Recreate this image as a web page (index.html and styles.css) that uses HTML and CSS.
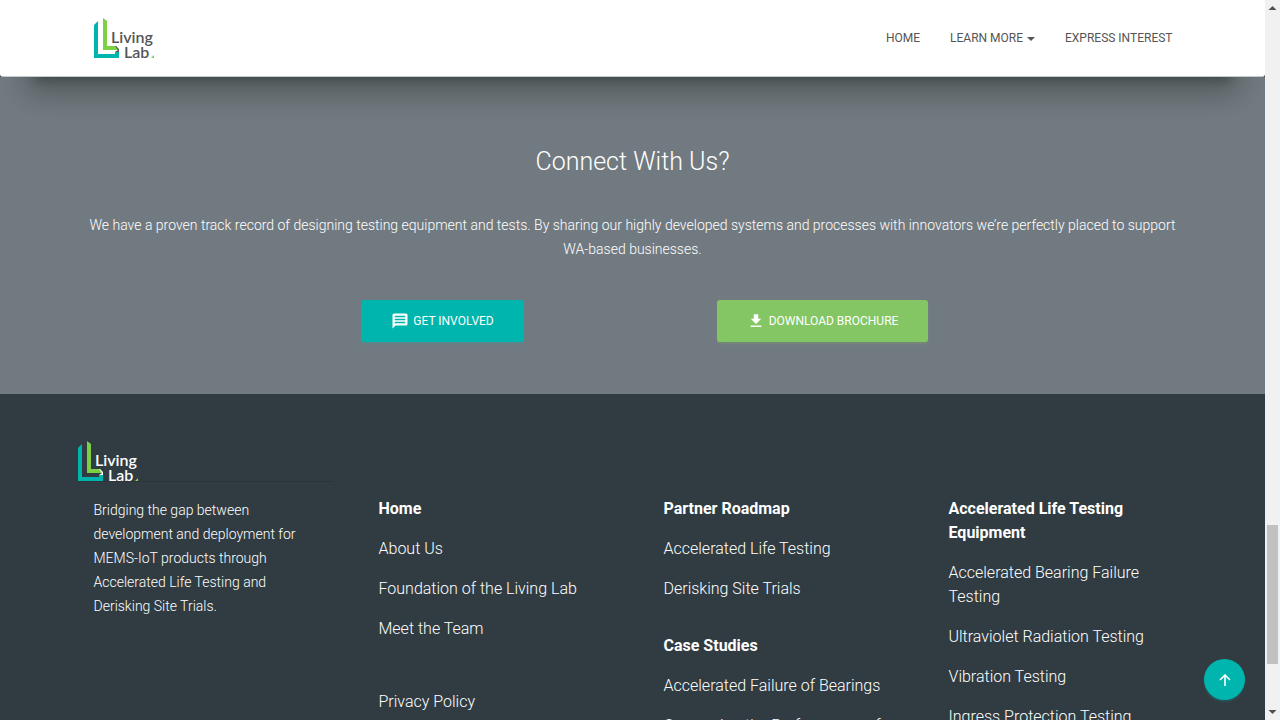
FILE: index.html
```html
<!DOCTYPE html>
<html lang="en">
<head>
<meta charset="utf-8">
<meta name="viewport" content="width=device-width, initial-scale=1">
<title>Living Lab</title>
<link rel="stylesheet" href="styles.css">
</head>
<body>
<div class="page">
  <header class="header">
    <nav class="container nav">
      <a href="#" class="brand" aria-label="Living Lab">
        <svg class="logo" viewBox="0 0 62 40">
          <path d="M0 7L4 3V36H21V34H25V40H0Z" fill="#00b5ad"/>
          <path d="M9 0L13 3V28H22L25 32H9Z" fill="#7cd043"/>
          <path d="M21 28H22L25 31V34H21L24 32Z" fill="#55555a"/>
          <path d="M60 37V40H57Z" fill="#7cd043"/>
          <text class="logo-text" x="17" y="25">Living</text>
          <text class="logo-text" x="30" y="40">Lab</text>
        </svg>
      </a>
      <ul class="menu">
        <li><a href="#">Home</a></li>
        <li><a href="#">Learn More <span class="caret"></span></a></li>
        <li><a href="#">Express Interest</a></li>
      </ul>
    </nav>
  </header>
  <main class="connect">
    <div class="raised"></div>
    <div class="container">
      <h2 class="title">Connect With Us?</h2>
      <p class="lead">We have a proven track record of designing testing equipment and tests. By sharing our highly developed systems and processes with innovators we’re perfectly placed to support WA-based businesses.</p>
      <div class="actions">
        <a href="#" class="btn btn-teal"><svg viewBox="0 0 24 24"><path fill-rule="evenodd" d="M20 2H4a2 2 0 0 0-2 2v18l4-4h14a2 2 0 0 0 2-2V4a2 2 0 0 0-2-2zM5 5h14v2H5zM5 9h14v2H5zM5 13h14v2H5z"/></svg>Get Involved</a>
        <a href="#" class="btn btn-green"><svg viewBox="0 0 24 24"><path d="M19 9h-4V3H9v6H5l7 7zM5 18v2h14v-2z"/></svg>Download Brochure</a>
      </div>
    </div>
  </main>
  <footer class="footer">
    <div class="container columns">
      <div class="about">
        <a href="#" class="brand-footer" aria-label="Living Lab">
          <svg class="logo logo-light" viewBox="0 0 62 40">
            <path d="M0 7L4 3V36H21V34H25V40H0Z" fill="#00b5ad"/>
            <path d="M9 0L13 3V28H22L25 32H9Z" fill="#7cd043"/>
            <path d="M21 28H22L25 31V34H21L24 32Z" fill="#fff"/>
            <path d="M60 37V40H57Z" fill="#7cd043"/>
            <text class="logo-text" x="17" y="25">Living</text>
            <text class="logo-text" x="30" y="40">Lab</text>
          </svg>
        </a>
        <p class="blurb">Bridging the gap between development and deployment for MEMS-IoT products through Accelerated Life Testing and Derisking Site Trials.</p>
      </div>
      <ul class="links">
        <li><a href="#" class="strong">Home</a></li>
        <li><a href="#">About Us</a></li>
        <li><a href="#">Foundation of the Living Lab</a></li>
        <li><a href="#">Meet the Team</a></li>
        <li class="gap-large"><a href="#">Privacy Policy</a></li>
      </ul>
      <ul class="links">
        <li><a href="#" class="strong">Partner Roadmap</a></li>
        <li><a href="#">Accelerated Life Testing</a></li>
        <li><a href="#">Derisking Site Trials</a></li>
        <li class="gap"><a href="#" class="strong">Case Studies</a></li>
        <li><a href="#">Accelerated Failure of Bearings</a></li>
        <li><a href="#">Comparing the Performance of</a></li>
      </ul>
      <ul class="links">
        <li><a href="#" class="strong">Accelerated Life Testing Equipment</a></li>
        <li><a href="#">Accelerated Bearing Failure Testing</a></li>
        <li><a href="#">Ultraviolet Radiation Testing</a></li>
        <li><a href="#">Vibration Testing</a></li>
        <li><a href="#">Ingress Protection Testing</a></li>
      </ul>
    </div>
  </footer>
  <button class="to-top" type="button" aria-label="Back to top"><svg viewBox="0 0 12 12"><path d="M6 12V1M1 6l5-5 5 5" fill="none" stroke="#fff" stroke-width="1.6"/></svg></button>
</div>
<div class="scrollbar" aria-hidden="true">
  <svg viewBox="0 0 15 15"><path d="M3.500 10H11.500L7.500 6Z"/></svg>
  <div class="track"><div class="thumb"></div></div>
  <svg viewBox="0 0 15 15"><path d="M3.500 5H11.500L7.500 9Z"/></svg>
</div>
</body>
</html>
```
FILE: styles.css
```css
* { box-sizing: border-box; }
body {
  margin: 0;
  height: 100vh;
  overflow: hidden;
  display: grid;
  grid-template-columns: minmax(0, 1fr) 15px;
  font: 300 14px/24px Roboto, "Liberation Sans", sans-serif;
  color: #fff;
}
a { color: inherit; text-decoration: none; }
ul { list-style: none; margin: 0; padding: 0; }
.page {
  height: 100vh;
  overflow: hidden;
  position: relative;
  background: #303c42;
}
.container { width: 100%; max-width: 1140px; margin: 0 auto; }

.header {
  position: relative;
  z-index: 2;
  background: #fff;
  border-bottom: 1px solid #c8cacb;
  border-radius: 0 0 3px 3px;
  padding: 18px 0;
}
.nav {
  display: flex;
  align-items: center;
  justify-content: space-between;
  padding: 0 30px 0 31px;
}
.logo { display: block; width: 62px; height: 40px; overflow: visible; }
.logo-text { font: 600 16px Lato, sans-serif; fill: #55555a; }
.logo-light .logo-text { fill: #fff; }
.menu {
  display: flex;
  gap: 30px;
  color: #555;
  font-size: 12px;
  font-weight: 400;
  text-transform: uppercase;
}
.caret {
  display: inline-block;
  vertical-align: middle;
  margin-left: 1px;
  border: 4px solid transparent;
  border-top-color: currentColor;
  border-bottom: 0;
}

.connect {
  position: relative;
  background: #727a81;
  padding: 69px 0 52px;
  text-align: center;
}
.raised {
  position: absolute;
  left: 30px;
  right: 30px;
  bottom: 100%;
  height: 76px;
  border-radius: 6px;
  box-shadow: 0 16px 24px 2px rgba(20, 30, 20, .2), 0 6px 30px 5px rgba(20, 30, 20, .16), 0 8px 10px -5px rgba(20, 30, 20, .3);
}
.title { margin: 0 0 35px; font-size: 25px; line-height: 32px; font-weight: 300; }
.lead { margin: 0; padding: 0 15px; }
.actions {
  display: grid;
  grid-template-columns: 1fr 1fr;
  justify-items: center;
  max-width: 760px;
  margin: 39px auto 0;
}
.btn {
  display: flex;
  align-items: center;
  gap: 4px;
  padding: 9px 30px;
  border-radius: 3px;
  font-size: 12px;
  font-weight: 400;
  text-transform: uppercase;
}
.btn svg { width: 18px; height: 18px; fill: #fff; }
.btn-teal { background: #00b5ad; box-shadow: 0 2px 2px rgba(0, 181, 173, .2); }
.btn-green { background: #84c663; box-shadow: 0 2px 2px rgba(132, 198, 99, .2); }

.footer { padding-top: 47px; }
.columns { display: grid; grid-template-columns: repeat(4, 1fr); }
.brand-footer {
  display: block;
  margin: 0 15px;
  border-bottom: 1px solid #2a3439;
}
.blurb { margin: 16px 31px 0; }
.links { padding: 56px 31px 0; font-size: 16px; }
.links li { margin-bottom: 16px; }
.links .gap { margin-top: 33px; }
.links .gap-large { margin-top: 49px; }
.strong { font-weight: 700; }

.to-top {
  position: absolute;
  right: 20px;
  bottom: 20px;
  width: 41px;
  height: 41px;
  display: grid;
  place-items: center;
  padding: 0;
  border: 0;
  border-radius: 50%;
  background: #00b5ad;
  box-shadow: 0 2px 2px rgba(0, 181, 173, .2);
}
.to-top svg { width: 12px; height: 12px; }

.scrollbar { display: flex; flex-direction: column; background: #f1f1f1; }
.scrollbar svg { width: 15px; height: 15px; fill: #505050; }
.track { flex: 1; padding: 0 2px; }
.thumb { margin-top: 510px; height: 139px; background: #c1c1c1; }
```
